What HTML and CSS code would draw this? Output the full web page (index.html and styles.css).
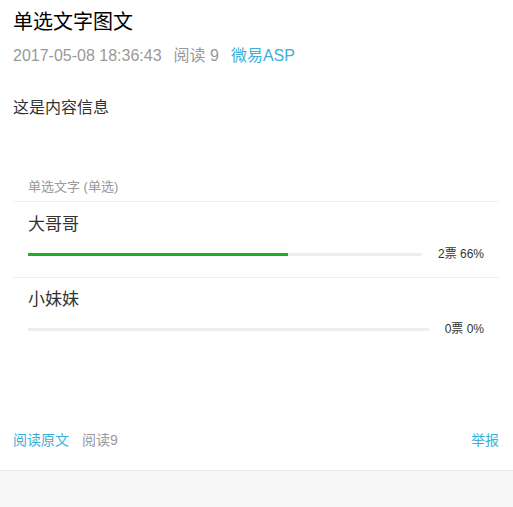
FILE: index.html
```html
<!doctype html>
<html lang="zh-CN">
<head>
  <meta charset="utf-8" />
  <meta name="viewport" content="width=device-width,initial-scale=1" />
  <title>单选文字图文</title>
  <link rel="stylesheet" href="styles.css">
</head>
<body>

<div class="article">
  <h1 class="title">单选文字图文</h1>
  <div class="meta">
    <span>2017-05-08 18:36:43</span>
    <span>阅读 9</span>
    <a class="link" href="#">微易ASP</a>
  </div>
  <div class="content">这是内容信息</div>

  <div class="vote">
    <div class="vote-title">单选文字 (单选)</div>
    <div class="option first">
      <div class="option-name">大哥哥</div>
      <div class="option-row">
        <div class="bar"><div class="bar-fill" style="width:66%"></div></div>
        <span class="count">2票 66%</span>
      </div>
    </div>
    <div class="option">
      <div class="option-name">小妹妹</div>
      <div class="option-row">
        <div class="bar"><div class="bar-fill" style="width:0%"></div></div>
        <span class="count">0票 0%</span>
      </div>
    </div>
  </div>

  <div class="footer">
    <a class="link" href="#">阅读原文</a>
    <span class="reads">阅读9</span>
    <a class="link report" href="#">举报</a>
  </div>
</div>
<div class="bottom"></div>

</body>
</html>
```

FILE: styles.css
```css
html,body{height:100%;}
body{margin:0;font-family:"Liberation Sans", Arial, "Noto Sans CJK SC", sans-serif;color:#333;background:#f7f7f7;}
.article{background:#fff;padding:8px 14px 0 13px;border-bottom:1px solid #e9e9e9;}
.title{margin:0;font-size:20px;font-weight:normal;line-height:28px;color:#000;}
.meta{margin-top:10px;font-size:16px;line-height:20px;color:#999;display:flex;gap:12px;}
.link{color:#3aafdb;text-decoration:none;}
.content{margin-top:32px;font-size:16px;line-height:20px;color:#333;}
.vote{margin-top:60px;}
.vote-title{padding:0 15px 5px;font-size:13px;line-height:18px;color:#999;border-bottom:1px solid #eee;}
.option{margin-left:15px;padding:10px 15px 16px 0;}
.option.first{margin-left:0;padding:11px 15px 15px;border-bottom:1px solid #eee;}
.option-name{font-size:17px;line-height:24px;color:#333;}
.option-row{display:flex;align-items:center;margin-top:9px;}
.bar{flex:1;height:3px;background:#eee;}
.bar-fill{height:100%;background:#1fae22;}
.count{font-size:12px;line-height:16px;color:#333;margin-left:16px;}
.footer{display:flex;align-items:center;gap:13px;margin-top:77px;padding-bottom:20px;font-size:14px;line-height:20px;}
.reads{color:#999;}
.report{margin-left:auto;}
```
